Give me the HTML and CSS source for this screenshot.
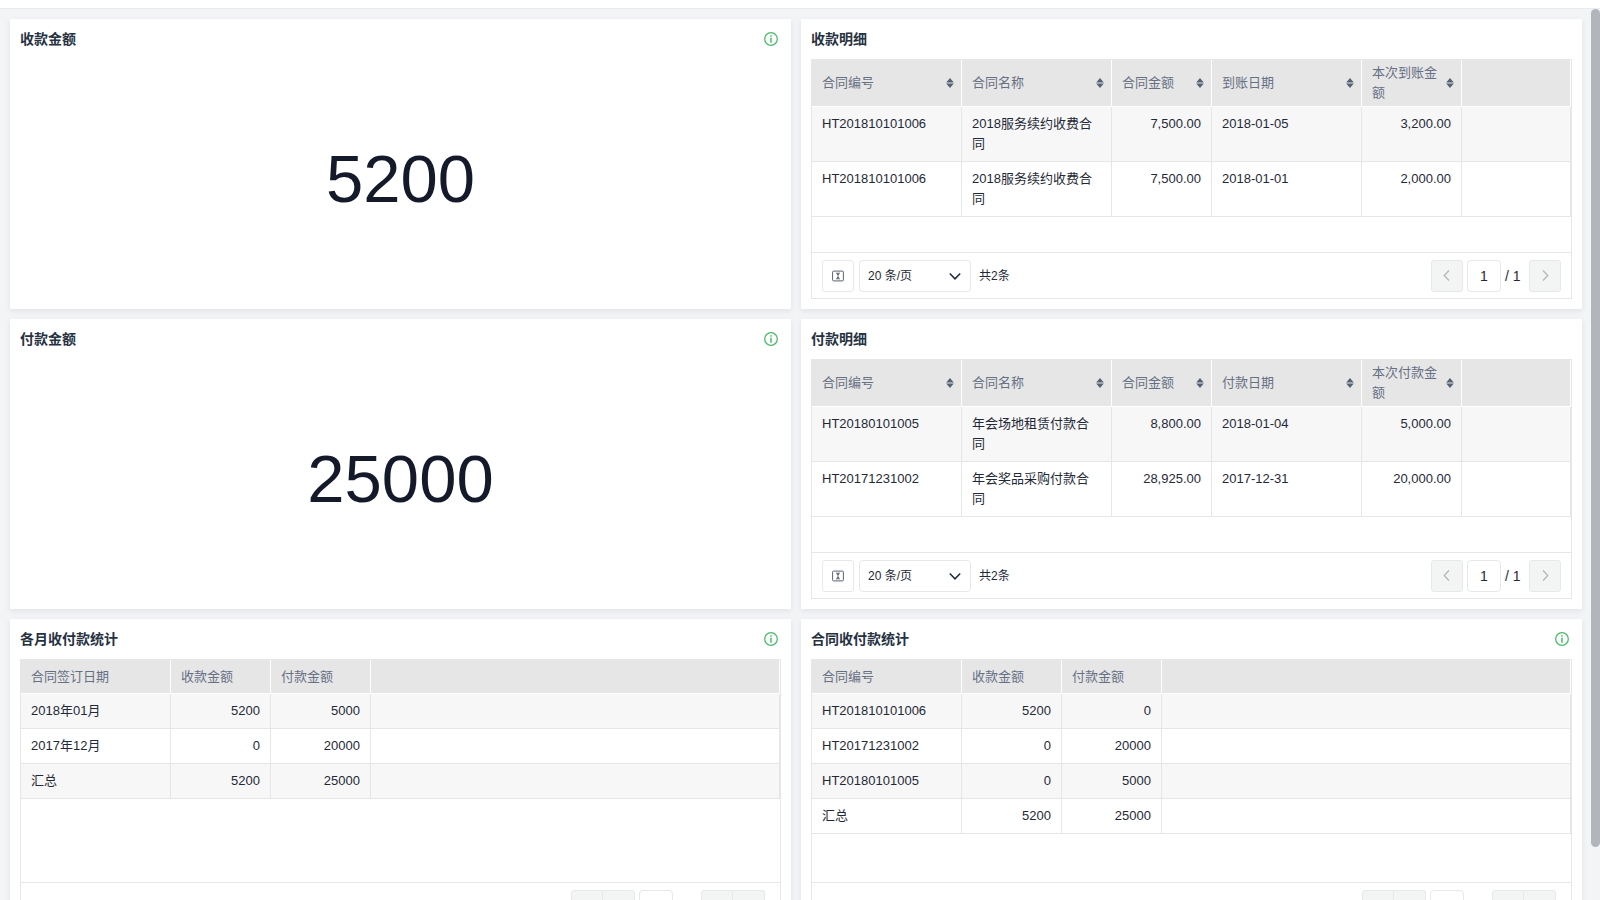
FILE: index.html
```html
<!DOCTYPE html>
<html lang="zh-CN">
<head>
<meta charset="utf-8">
<title>收付款统计</title>
<link rel="stylesheet" href="styles.css">
</head>
<body>
<svg class="sprite" aria-hidden="true">
  <symbol id="info" viewBox="0 0 14 14"><circle cx="7" cy="7" r="6.3" fill="none" stroke="currentColor" stroke-width="1.3"/><path d="M7 5.8v4.9M7 3.3v1.5" fill="none" stroke="currentColor" stroke-width="1.5"/></symbol>
  <symbol id="sort" viewBox="0 0 8 10"><path d="M4 0 7.8 4.5H.2zM4 10 .2 5.5h7.6z" fill="currentColor"/></symbol>
  <symbol id="rows" viewBox="0 0 12 12"><rect x=".6" y="1.1" width="10.8" height="9.8" rx="1" fill="none" stroke="currentColor"/><path d="M4 3.2h4M4 8.8h4M6 3.2v5.6" fill="none" stroke="currentColor" stroke-width=".9"/><path d="M6 3.2 7.4 5H4.6zM6 8.8 4.6 7h2.8z" fill="currentColor"/></symbol>
  <symbol id="left" viewBox="0 0 12 12"><path d="M8 .5 3.2 5.5l4.8 5" fill="none" stroke="currentColor" stroke-width="1.2"/></symbol>
  <symbol id="right" viewBox="0 0 12 12"><path d="M4 .5l4.8 5-4.8 5" fill="none" stroke="currentColor" stroke-width="1.2"/></symbol>
  <symbol id="down" viewBox="0 0 12 12"><path d="M.8 3.4 6 8.8l5.2-5.4" fill="none" stroke="currentColor" stroke-width="1.5"/></symbol>
</svg>
<header class="topbar"></header>
<main class="viewport">
  <div class="board">
    <section class="card">
      <div class="card-head"><h2>收款金额</h2><button class="info" type="button" aria-label="说明"><svg><use href="#info"/></svg></button></div>
      <div class="figure">5200</div>
    </section>

    <section class="card">
      <div class="card-head"><h2>收款明细</h2></div>
      <div class="grid-box">
        <div class="grid-scroll">
          <table>
            <colgroup><col class="wide"><col class="wide"><col class="narrow"><col class="wide"><col class="narrow"><col></colgroup>
            <thead><tr>
              <th><div class="th"><span>合同编号</span><svg><use href="#sort"/></svg></div></th>
              <th><div class="th"><span>合同名称</span><svg><use href="#sort"/></svg></div></th>
              <th><div class="th"><span>合同金额</span><svg><use href="#sort"/></svg></div></th>
              <th><div class="th"><span>到账日期</span><svg><use href="#sort"/></svg></div></th>
              <th><div class="th"><span>本次到账金额</span><svg><use href="#sort"/></svg></div></th>
              <th></th>
            </tr></thead>
            <tbody>
              <tr><td>HT201810101006</td><td>2018服务续约收费合同</td><td class="num">7,500.00</td><td>2018-01-05</td><td class="num">3,200.00</td><td></td></tr>
              <tr><td>HT201810101006</td><td>2018服务续约收费合同</td><td class="num">7,500.00</td><td>2018-01-01</td><td class="num">2,000.00</td><td></td></tr>
            </tbody>
          </table>
        </div>
        <div class="pager">
          <button class="btn" type="button" aria-label="行高"><svg><use href="#rows"/></svg></button>
          <div class="select"><select aria-label="每页条数"><option>20 条/页</option></select><svg><use href="#down"/></svg></div>
          <span class="total">共2条</span>
          <div class="pages">
            <button class="btn muted" type="button" aria-label="上一页" disabled><svg><use href="#left"/></svg></button>
            <input class="page" type="text" value="1" aria-label="页码">
            <span class="of">/ 1</span>
            <button class="btn muted" type="button" aria-label="下一页" disabled><svg><use href="#right"/></svg></button>
          </div>
        </div>
      </div>
    </section>

    <section class="card">
      <div class="card-head"><h2>付款金额</h2><button class="info" type="button" aria-label="说明"><svg><use href="#info"/></svg></button></div>
      <div class="figure">25000</div>
    </section>

    <section class="card">
      <div class="card-head"><h2>付款明细</h2></div>
      <div class="grid-box">
        <div class="grid-scroll">
          <table>
            <colgroup><col class="wide"><col class="wide"><col class="narrow"><col class="wide"><col class="narrow"><col></colgroup>
            <thead><tr>
              <th><div class="th"><span>合同编号</span><svg><use href="#sort"/></svg></div></th>
              <th><div class="th"><span>合同名称</span><svg><use href="#sort"/></svg></div></th>
              <th><div class="th"><span>合同金额</span><svg><use href="#sort"/></svg></div></th>
              <th><div class="th"><span>付款日期</span><svg><use href="#sort"/></svg></div></th>
              <th><div class="th"><span>本次付款金额</span><svg><use href="#sort"/></svg></div></th>
              <th></th>
            </tr></thead>
            <tbody>
              <tr><td>HT20180101005</td><td>年会场地租赁付款合同</td><td class="num">8,800.00</td><td>2018-01-04</td><td class="num">5,000.00</td><td></td></tr>
              <tr><td>HT20171231002</td><td>年会奖品采购付款合同</td><td class="num">28,925.00</td><td>2017-12-31</td><td class="num">20,000.00</td><td></td></tr>
            </tbody>
          </table>
        </div>
        <div class="pager">
          <button class="btn" type="button" aria-label="行高"><svg><use href="#rows"/></svg></button>
          <div class="select"><select aria-label="每页条数"><option>20 条/页</option></select><svg><use href="#down"/></svg></div>
          <span class="total">共2条</span>
          <div class="pages">
            <button class="btn muted" type="button" aria-label="上一页" disabled><svg><use href="#left"/></svg></button>
            <input class="page" type="text" value="1" aria-label="页码">
            <span class="of">/ 1</span>
            <button class="btn muted" type="button" aria-label="下一页" disabled><svg><use href="#right"/></svg></button>
          </div>
        </div>
      </div>
    </section>

    <section class="card tall">
      <div class="card-head"><h2>各月收付款统计</h2><button class="info" type="button" aria-label="说明"><svg><use href="#info"/></svg></button></div>
      <div class="grid-box">
        <div class="grid-scroll">
          <table>
            <colgroup><col class="wide"><col class="narrow"><col class="narrow"><col></colgroup>
            <thead><tr><th>合同签订日期</th><th>收款金额</th><th>付款金额</th><th></th></tr></thead>
            <tbody>
              <tr><td>2018年01月</td><td class="num">5200</td><td class="num">5000</td><td></td></tr>
              <tr><td>2017年12月</td><td class="num">0</td><td class="num">20000</td><td></td></tr>
              <tr><td>汇总</td><td class="num">5200</td><td class="num">25000</td><td></td></tr>
            </tbody>
          </table>
        </div>
        <div class="pager summary">
          <div class="pages">
            <div class="pair"><button class="btn muted" type="button" aria-label="首页" disabled></button><button class="btn muted" type="button" aria-label="上一页" disabled></button></div>
            <input class="page" type="text" aria-label="页码">
            <span class="of"></span>
            <div class="pair"><button class="btn muted" type="button" aria-label="下一页" disabled></button><button class="btn muted" type="button" aria-label="末页" disabled></button></div>
          </div>
        </div>
      </div>
    </section>

    <section class="card tall">
      <div class="card-head"><h2>合同收付款统计</h2><button class="info" type="button" aria-label="说明"><svg><use href="#info"/></svg></button></div>
      <div class="grid-box">
        <div class="grid-scroll">
          <table>
            <colgroup><col class="wide"><col class="narrow"><col class="narrow"><col></colgroup>
            <thead><tr><th>合同编号</th><th>收款金额</th><th>付款金额</th><th></th></tr></thead>
            <tbody>
              <tr><td>HT201810101006</td><td class="num">5200</td><td class="num">0</td><td></td></tr>
              <tr><td>HT20171231002</td><td class="num">0</td><td class="num">20000</td><td></td></tr>
              <tr><td>HT20180101005</td><td class="num">0</td><td class="num">5000</td><td></td></tr>
              <tr><td>汇总</td><td class="num">5200</td><td class="num">25000</td><td></td></tr>
            </tbody>
          </table>
        </div>
        <div class="pager summary">
          <div class="pages">
            <div class="pair"><button class="btn muted" type="button" aria-label="首页" disabled></button><button class="btn muted" type="button" aria-label="上一页" disabled></button></div>
            <input class="page" type="text" aria-label="页码">
            <span class="of"></span>
            <div class="pair"><button class="btn muted" type="button" aria-label="下一页" disabled></button><button class="btn muted" type="button" aria-label="末页" disabled></button></div>
          </div>
        </div>
      </div>
    </section>
  </div>
  <div class="scroll-thumb"></div>
</main>
</body>
</html>
```
FILE: styles.css
```css
* { box-sizing: border-box; }

body {
  margin: 0;
  height: 100vh;
  display: flex;
  flex-direction: column;
  overflow: hidden;
  background: #f2f4f6;
  color: #1f2937;
  font: 13px/20px "Liberation Sans", "Noto Sans CJK SC", sans-serif;
}

button, input, select { font-family: inherit; color: inherit; margin: 0; }
.sprite { display: none; }

.topbar {
  flex: none;
  height: 9px;
  background: #fff;
  border-bottom: 1px solid #e9ebed;
}

.viewport {
  position: relative;
  flex: 1;
  min-height: 0;
  overflow: hidden;
}

.board {
  display: grid;
  grid-template-columns: 1fr 1fr;
  gap: 10px;
  padding: 10px 18px 10px 10px;
}

.scroll-thumb {
  position: absolute;
  top: 0;
  right: 0;
  width: 9px;
  height: 94%;
  border-radius: 5px;
  background: #b2b6bc;
}

.card {
  min-width: 0;
  min-height: 290px;
  display: flex;
  flex-direction: column;
  padding: 0 10px 10px;
  background: #fff;
  box-shadow: 0 2px 6px rgba(30, 30, 80, .08);
}
.card.tall { min-height: 320px; }

.card-head {
  height: 40px;
  display: flex;
  align-items: center;
  justify-content: space-between;
}
.card-head h2 {
  margin: 0;
  font-size: 14px;
  font-weight: 600;
  color: #26323f;
}
.info {
  display: flex;
  margin-right: 3px;
  padding: 0;
  border: 0;
  background: none;
  color: #4abb6b;
}
.info svg { width: 14px; height: 14px; }

.figure {
  flex: 1;
  display: flex;
  align-items: center;
  justify-content: center;
  font-size: 67px;
  line-height: 80px;
  color: #141a2a;
}

.grid-box {
  flex: 1;
  display: flex;
  flex-direction: column;
  border: 1px solid #e6e6e6;
}
.grid-scroll { flex: 1; }

table {
  width: 100%;
  table-layout: fixed;
  border-collapse: separate;
  border-spacing: 0;
}
.wide { width: 150px; }
.narrow { width: 100px; }

th {
  height: 34px;
  padding: 3px 10px;
  border-right: 1px solid #fff;
  border-bottom: 1px solid #fff;
  background: #e6e6e6;
  color: #667085;
  font-weight: 400;
  text-align: left;
  vertical-align: middle;
}
.th {
  display: flex;
  align-items: center;
  justify-content: space-between;
  margin-right: -3px;
}
.th svg { flex: none; width: 8px; height: 10px; color: #566275; }

td {
  height: 35px;
  padding: 7px 10px;
  border-right: 1px solid #e6e6e6;
  border-bottom: 1px solid #e6e6e6;
  vertical-align: top;
}
tbody tr:nth-child(odd) { background: #f7f7f7; }
.num { text-align: right; }

.pager {
  display: flex;
  align-items: center;
  padding: 7px 10px 6px;
  border-top: 1px solid #e6e6e6;
  font-size: 12px;
}
.pager.summary { padding-right: 15px; }

.btn {
  width: 32px;
  height: 32px;
  display: flex;
  align-items: center;
  justify-content: center;
  padding: 0;
  border: 1px solid #e6e8ea;
  border-radius: 3px;
  background: #fff;
  color: #5b6270;
}
.btn svg { width: 12px; height: 12px; }
.btn.muted { background: #f3f5f5; color: #b0b4b9; }

.pair { display: flex; }
.pair .btn:first-child { border-radius: 3px 0 0 3px; }
.pair .btn:last-child { border-radius: 0 3px 3px 0; border-left: 0; }

.select { position: relative; margin: 0 8px 0 5px; }
.select select {
  width: 112px;
  height: 32px;
  padding: 0 8px;
  border: 1px solid #e6e8ea;
  border-radius: 4px;
  background: #fff;
  font-size: 12px;
  appearance: none;
}
.select svg {
  position: absolute;
  top: 10px;
  right: 10px;
  width: 12px;
  height: 12px;
  pointer-events: none;
}

.pages {
  display: flex;
  align-items: center;
  gap: 4px;
  margin-left: auto;
  font-size: 14px;
}
.page {
  width: 34px;
  height: 32px;
  padding: 0;
  border: 1px solid #e6e8ea;
  border-radius: 4px;
  background: #fff;
  font-size: 14px;
  text-align: center;
}
.of { width: 20px; white-space: nowrap; }
```
